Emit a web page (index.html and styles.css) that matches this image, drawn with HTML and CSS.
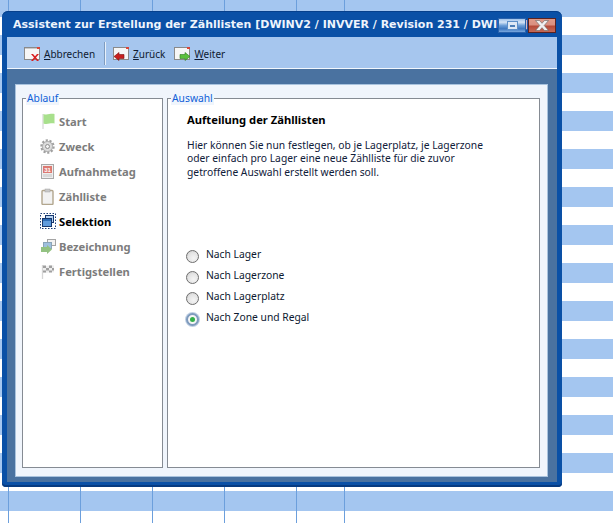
FILE: index.html
```html
<!DOCTYPE html>
<html lang="de">
<head>
<meta charset="utf-8">
<title>Assistent</title>
<link rel="stylesheet" href="styles.css">
</head>
<body>
<div class="window">
  <div class="titlebar">
    <span class="title">Assistent zur Erstellung der Zähllisten [DWINV2 / INVVER / Revision 231 / DWINV2]</span>
    <div class="caption-buttons">
      <div class="cap cap-min"><span class="cap-glyph"></span></div>
      <div class="cap cap-close">
        <svg width="16" height="11" viewBox="0 0 16 11"><path d="M1.500 .5h4l2.500 2.800 2.500-2.800h4l-4.300 5 4.300 5h-4l-2.500-2.800-2.500 2.800h-4l4.300-5z" fill="#f0f0f0" stroke="#666" stroke-width=".6"/></svg>
      </div>
    </div>
  </div>
  <div class="toolbar">
    <div class="tool">
      <svg class="tool-icon" width="17" height="16" viewBox="0 0 17 16"><rect x=".5" y=".5" width="15" height="12" fill="#f6f6f6" stroke="#8a8a8a"/><rect x="1" y="1" width="14" height="1" fill="#c9c9c9"/><rect x="13" y="0" width="3" height="2" fill="#d9463a"/><path d="M7 7l2 0 2 2.300 2-2.300 2 0-3 3.500 3 3.500h-2l-2-2.300-2 2.300h-2l3-3.500z" fill="#d81e1e"/></svg>
      <span><u>A</u>bbrechen</span>
    </div>
    <div class="tool-sep"></div>
    <div class="tool">
      <svg class="tool-icon" width="17" height="16" viewBox="0 0 17 16"><rect x=".5" y=".5" width="15" height="12" fill="#f6f6f6" stroke="#8a8a8a"/><rect x="13" y="0" width="3" height="2" fill="#d9463a"/><path d="M1 9.500l5-4v2h5v4h-5v2z" fill="#c8201e" stroke="#7a1010" stroke-width=".6"/></svg>
      <span><u>Z</u>urück</span>
    </div>
    <div class="tool tool-next">
      <svg class="tool-icon" width="17" height="16" viewBox="0 0 17 16"><rect x=".5" y=".5" width="15" height="12" fill="#f6f6f6" stroke="#8a8a8a"/><rect x="13" y="0" width="3" height="2" fill="#d9463a"/><path d="M16 9.500l-5-4v2h-5v4h5v2z" fill="#5cc03c" stroke="#2f7a20" stroke-width=".6"/></svg>
      <span><u>W</u>eiter</span>
    </div>
  </div>
  <div class="client">
    <div class="panel">
      <fieldset class="group group-steps">
        <legend>Ablauf</legend>
        <ul class="steps">
          <li>
            <svg width="17" height="17" viewBox="0 0 17 17"><path d="M3 1v15" stroke="#dedede" stroke-width="1.500"/><path d="M3.500 1c4 1.500 7-1 11 0v9.500c-4-1-7 1.500-11 0z" fill="#a8e08c"/></svg>
            <span>Start</span>
          </li>
          <li>
            <svg width="17" height="17" viewBox="0 0 17 17"><circle cx="7.500" cy="8.500" r="5.700" fill="#d4d4d4" stroke="#a0a0a0" stroke-width="3" stroke-dasharray="2 1.500"/><circle cx="7.500" cy="8.500" r="5" fill="#dcdcdc" stroke="#b0b0b0"/><circle cx="7.500" cy="8.500" r="2" fill="#f4f4f4" stroke="#8f8f8f"/></svg>
            <span>Zweck</span>
          </li>
          <li>
            <svg width="17" height="17" viewBox="0 0 17 17"><rect x="1.500" y="1.500" width="12" height="14" fill="#eee" stroke="#a9a9a9"/><rect x="3" y="3" width="9" height="7" fill="#dc7a72"/><rect x="3" y="11" width="9" height="3" fill="#d8d8d8"/><text x="7.500" y="9" class="cal-text">31</text></svg>
            <span>Aufnahmetag</span>
          </li>
          <li>
            <svg width="17" height="17" viewBox="0 0 17 17"><rect x="2" y="2.500" width="11" height="14" rx="1" fill="#f2f2f2" stroke="#b2a68e" stroke-width="1.400"/><rect x="5" y="1" width="5" height="3" fill="#c9c9c9" stroke="#a3a3a3" stroke-width=".5"/></svg>
            <span>Zählliste</span>
          </li>
          <li class="active">
            <svg width="17" height="17" viewBox="0 0 17 17"><rect x=".5" y=".5" width="15" height="15" fill="none" stroke="#1a3d78" stroke-dasharray="1.500 1.500"/><rect x="5.500" y="2.500" width="8" height="7" fill="#b9d4f2" stroke="#17386e"/><rect x="2.500" y="5.500" width="9" height="8" fill="#5f9bdc" stroke="#17386e"/><rect x="3" y="6" width="8" height="2" fill="#2e6db5"/></svg>
            <span>Selektion</span>
          </li>
          <li>
            <svg width="17" height="17" viewBox="0 0 17 17"><rect x="7.500" y="1.500" width="8" height="6" fill="#f2f2f2" stroke="#a4a4a4"/><rect x="3.500" y="4.500" width="8" height="6" fill="#9fc0de" stroke="#8aa4b8"/><path d="M1 9h6v-2l5 4.500-5 4.500v-2h-6z" fill="#93c282"/></svg>
            <span>Bezeichnung</span>
          </li>
          <li>
            <svg width="17" height="17" viewBox="0 0 17 17"><path d="M2.500 2v14" stroke="#d6d6d6" stroke-width="1.300"/><path d="M3 2.500c4 1.500 7-1 11 0v7c-4-1-7 1.500-11 0z" fill="#eee"/><path d="M3 2.500h3v2.500h-3zM9 2.500h3v2.500h-3zM6 5h3v2.500h-3zM12 5h2v2.500h-2zM3 7.500h3v2h-3zM9 7.500h3v2h-3z" fill="#a0a0a0"/></svg>
            <span>Fertigstellen</span>
          </li>
        </ul>
      </fieldset>
      <fieldset class="group group-main">
        <legend>Auswahl</legend>
        <h1 class="heading">Aufteilung der Zähllisten</h1>
        <p class="intro">Hier können Sie nun festlegen, ob je Lagerplatz, je Lagerzone<br>oder einfach pro Lager eine neue Zählliste für die zuvor<br>getroffene Auswahl erstellt werden soll.</p>
        <div class="radios">
          <div class="radio-row"><span class="radio"></span><span class="radio-label">Nach Lager</span></div>
          <div class="radio-row"><span class="radio"></span><span class="radio-label">Nach Lagerzone</span></div>
          <div class="radio-row"><span class="radio"></span><span class="radio-label">Nach Lagerplatz</span></div>
          <div class="radio-row"><span class="radio radio-on"></span><span class="radio-label">Nach Zone und Regal</span></div>
        </div>
      </fieldset>
    </div>
  </div>
</div>
</body>
</html>
```

FILE: styles.css
```css
* { box-sizing: border-box; }
html, body { height: 100%; }
body {
  margin: 0;
  padding: 11px 0 0 2px;
  overflow: hidden;
  font-family: "Noto Sans", "Liberation Sans", sans-serif;
  font-size: 10.300px;
  color: #10203a;
  background-color: #fff;
  background-image:
    linear-gradient(#6c9fdc, #6c9fdc),
    linear-gradient(#6c9fdc, #6c9fdc),
    linear-gradient(#6c9fdc, #6c9fdc),
    linear-gradient(#6c9fdc, #6c9fdc),
    linear-gradient(#6c9fdc, #6c9fdc),
    linear-gradient(#6c9fdc, #6c9fdc),
    linear-gradient(#a4c6f0 20px, transparent 20px);
  background-size: 1px 100%, 1px 100%, 1px 100%, 1px 100%, 1px 100%, 1px 100%, 100% 38px;
  background-position: 8px 0, 80px 0, 152px 0, 224px 0, 296px 0, 344px 0, 0 -3px;
  background-repeat: no-repeat, no-repeat, no-repeat, no-repeat, no-repeat, no-repeat, repeat-y;
}
.window {
  position: relative;
  width: 560px;
  height: 476px;
  display: flex;
  flex-direction: column;
  padding: 0 5px 5px;
  background: #0a50a6;
  border-radius: 6px 6px 4px 4px;
  box-shadow: inset 0 -2px #063a80, inset 0 1px #06408c;
}
.titlebar {
  height: 26px;
  flex: none;
  display: flex;
  align-items: center;
  overflow: hidden;
  padding-left: 6px;
}
.title {
  font-family: "DejaVu Sans", sans-serif;
  font-weight: 700;
  font-size: 11px;
  color: #eef4fc;
  white-space: nowrap;
}
.caption-buttons {
  position: absolute;
  top: 7px;
  right: 6px;
  display: flex;
  gap: 2px;
}
.cap {
  width: 28px;
  height: 15px;
  display: flex;
  align-items: center;
  justify-content: center;
}
.cap-min {
  background: linear-gradient(#9fc2ea 0, #d4e4f6 25%, #6d9fd8 50%, #3d77c0 75%, #7aa8de 100%);
  border: 1px solid #2a62ac;
}
.cap-glyph {
  width: 11px;
  height: 9px;
  background: #dde8f5;
  border: 1px solid #5d8fc8;
  display: flex;
  align-items: center;
  justify-content: center;
}
.cap-glyph::after { content: ""; width: 5px; height: 2px; background: #4d7fb8; }
.cap-close {
  background: linear-gradient(#e09a88 0, #d99080 45%, #b54a38 55%, #c46a58 100%);
  border: 1px solid #5c2320;
}
.toolbar {
  height: 32px;
  flex: none;
  display: flex;
  align-items: center;
  padding: 2px 0 0 17px;
  background: #a6c6ee;
  border-bottom: 1px solid #f2f7fd;
}
.tool {
  display: flex;
  align-items: center;
  gap: 3px;
  font-size: 10px;
  color: #0e1a30;
}
.tool-icon { flex: none; margin-top: 2px; }
.tool-sep {
  width: 2px;
  height: 23px;
  margin: 0 7px 0 9px;
  background: #e8f0fa;
  border-left: 1px solid #7f9cc0;
}
.tool-next { margin-left: 9px; }
.client {
  flex: 1;
  min-height: 0;
  padding: 15px 9px 5px 8px;
  background: #4a72a0;
}
.panel {
  height: 100%;
  display: flex;
  gap: 4px;
  padding: 7px 7px 8px 6px;
  background: #f0f5fc;
  border: 1px solid #a9c3de;
}
.group {
  margin: 0;
  min-width: 0;
  padding: 0;
  border: 1px solid #858b93;
  background: #fff;
  background-clip: padding-box;
}
.group legend {
  margin-left: 3px;
  padding: 0 1px;
  color: #0f5fd8;
  line-height: 13px;
  background: #f0f5fc;
}
.group-steps { width: 141px; flex: none; }
.group-main { flex: 1; }
.steps {
  list-style: none;
  margin: 0;
  padding: 4px 0 0 17px;
}
.steps li {
  height: 25px;
  display: flex;
  align-items: center;
  gap: 2px;
  font-weight: 700;
  font-size: 11.200px;
  color: #7c7c7c;
}
.steps li svg { flex: none; }
.steps li.active { color: #000; }
.cal-text {
  font-family: "Liberation Sans", sans-serif;
  font-size: 6px;
  font-weight: 700;
  fill: #fff;
  text-anchor: middle;
}
.heading {
  margin: 8px 0 0 19px;
  font-size: 11.200px;
  line-height: 14px;
  font-weight: 700;
  color: #000;
}
.intro {
  margin: 12px 0 0 19px;
  line-height: 13.300px;
  color: #10203a;
}
.radios {
  margin: 68px 0 0 18px;
  display: flex;
  flex-direction: column;
}
.radio-row {
  height: 21px;
  display: flex;
  gap: 7px;
}
.radio {
  flex: none;
  width: 13px;
  height: 13px;
  margin-top: 3px;
  border-radius: 50%;
  border: 1px solid #6e6e6e;
  background: radial-gradient(circle at 60% 65%, #f4f4f4 0, #e4e4e4 55%, #c4c4c4 100%);
}
.radio-on {
  display: flex;
  align-items: center;
  justify-content: center;
  background: #f6f6f6;
  border: 2px solid #7f9bbd;
  box-shadow: 0 0 0 1px #c0d0e4;
}
.radio-on::after {
  content: "";
  width: 5px;
  height: 5px;
  border-radius: 50%;
  background: #34b04a;
}
.radio-label { line-height: 13px; margin-top: 1px; color: #0c1830; }
```
